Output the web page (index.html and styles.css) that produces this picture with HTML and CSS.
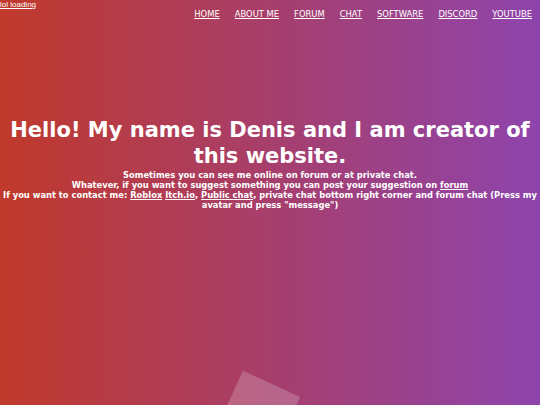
FILE: index.html
```html
<!DOCTYPE html>
<html>
<head>
<meta charset="utf-8">
<link rel="stylesheet" href="styles.css">
</head>
<body>
<div class="page">
  <a class="loading" href="#">lol loading</a>
  <nav class="nav">
    <a href="#">HOME</a>
    <a href="#">ABOUT ME</a>
    <a href="#">FORUM</a>
    <a href="#">CHAT</a>
    <a href="#">SOFTWARE</a>
    <a href="#">DISCORD</a>
    <a href="#">YOUTUBE</a>
  </nav>
  <main class="hero">
    <h1 class="title">Hello! My name is Denis and I am creator of this website.</h1>
    <p class="text">Sometimes you can see me online on forum or at private chat.<br>
    Whatever, if you want to suggest something you can post your suggestion on <a href="#">forum</a><br>
    If you want to contact me: <a href="#">Roblox</a> <a href="#">Itch.io</a>, <a href="#">Public chat</a>, private chat bottom right corner and forum chat (Press my avatar and press "message")</p>
  </main>
  <div class="square"></div>
</div>
</body>
</html>
```
FILE: styles.css
```css
html, body {
  margin: 0;
  padding: 0;
  height: 100%;
}
body {
  background: linear-gradient(to right, #c0392b, #8e44ad);
  font-family: "DejaVu Sans", Verdana, sans-serif;
  color: #fff;
  overflow: hidden;
}
.page {
  position: relative;
  height: 100%;
  overflow: hidden;
}
a {
  color: #fff;
}
.loading {
  display: block;
  font-family: "Liberation Sans", Arial, sans-serif;
  font-size: 8px;
  line-height: 9px;
  position: absolute;
  top: 0;
  left: 0;
}
.nav {
  display: flex;
  justify-content: flex-end;
  gap: 15px;
  padding: 9px 8px 0 0;
  font-size: 8.4px;
  line-height: 11px;
}
.nav a {
  color: #fff;
}
.hero {
  text-align: center;
  margin-top: 97px;
}
.title {
  font-size: 21px;
  line-height: 26px;
  font-weight: bold;
  margin: 0;
}
.text {
  font-size: 8.35px;
  font-weight: bold;
  line-height: 10px;
  margin: 1px 0 0;
}
.square {
  position: absolute;
  left: 227px;
  top: 381px;
  width: 63px;
  height: 63px;
  background: rgba(255, 255, 255, 0.2);
  transform: rotate(24.5deg);
}
```
